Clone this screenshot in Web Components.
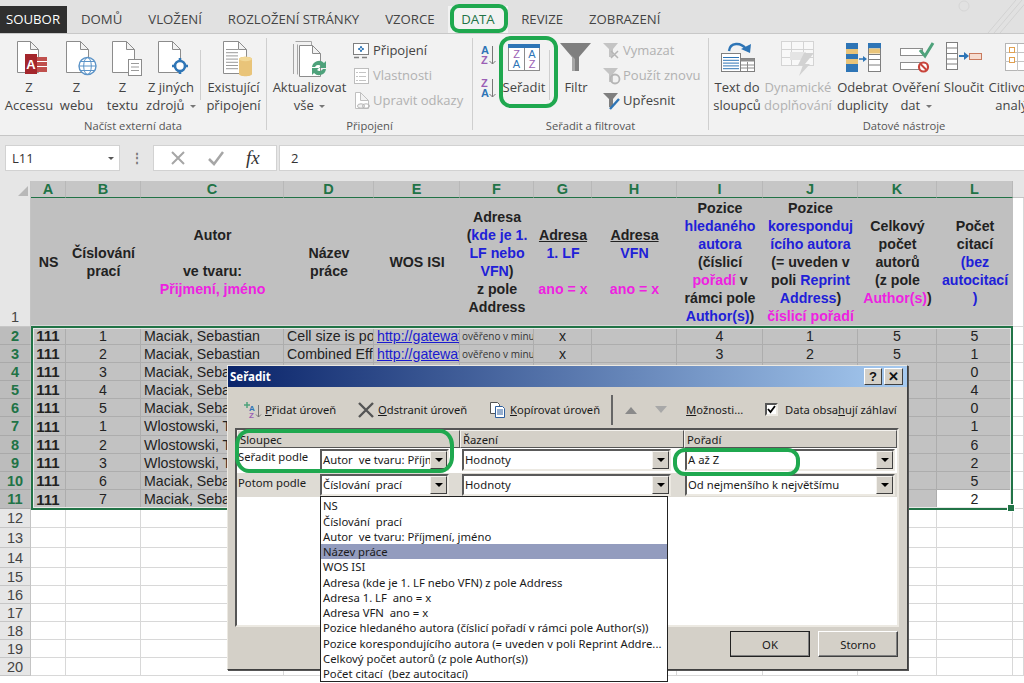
<!DOCTYPE html>
<html lang="cs">
<head>
<meta charset="utf-8">
<title>Seřadit</title>
<style>
  html, body { margin: 0; padding: 0; width: 1024px; height: 683px; overflow: hidden; background: #fff; }
  body { position: relative; font-family: "Open Sans", "Noto Sans", sans-serif; }
</style>
</head>
<body>
<xl-tabbar>
  <xl-tab kind="file">SOUBOR</xl-tab>
  <xl-tab>DOMŮ</xl-tab>
  <xl-tab>VLOŽENÍ</xl-tab>
  <xl-tab>ROZLOŽENÍ STRÁNKY</xl-tab>
  <xl-tab>VZORCE</xl-tab>
  <xl-tab kind="active">DATA</xl-tab>
  <xl-tab>REVIZE</xl-tab>
  <xl-tab>ZOBRAZENÍ</xl-tab>
</xl-tabbar>

<xl-ribbon>
  <rb-group label="Načíst externí data" style="width:267px">
    <rb-big w="48" pad="5" icon="access">Z<br>Accessu</rb-big>
    <rb-big w="47" icon="web">Z<br>webu</rb-big>
    <rb-big w="45" icon="text">Z<br>textu</rb-big>
    <rb-big w="52" icon="other">Z jiných<br>zdrojů <rb-caret></rb-caret></rb-big>
    <rb-sep style="margin-left:3px"></rb-sep>
    <rb-big w="65" icon="existing">Existující<br>připojení</rb-big>
  </rb-group>
  <rb-group label="Připojení" style="width:206px">
    <rb-big w="85" icon="refresh">Aktualizovat<br>vše <rb-caret></rb-caret></rb-big>
    <rb-col>
      <rb-small icon="conn">Připojení</rb-small>
      <rb-small icon="props" muted>Vlastnosti</rb-small>
      <rb-small icon="links" muted>Upravit odkazy</rb-small>
    </rb-col>
  </rb-group>
  <rb-group label="Seřadit a filtrovat" style="width:236px">
    <rb-az></rb-az>
    <rb-big w="50" icon="sort">Seřadit</rb-big>
    <rb-sep></rb-sep>
    <rb-big w="52" icon="filter">Filtr</rb-big>
    <rb-col>
      <rb-small icon="fclear" muted>Vymazat</rb-small>
      <rb-small icon="freapply" muted>Použít znovu</rb-small>
      <rb-small icon="fadv">Upřesnit</rb-small>
    </rb-col>
  </rb-group>
  <rb-group label="Datové nástroje" style="width:390px" last>
    <rb-big w="56" icon="columns">Text do<br>sloupců</rb-big>
    <rb-big w="66" icon="flash" muted>Dynamické<br>doplňování</rb-big>
    <rb-big w="63" icon="dupes">Odebrat<br>duplicity</rb-big>
    <rb-big w="44" icon="valid">Ověření<br>dat <rb-caret></rb-caret></rb-big>
    <rb-big w="52" icon="merge">Sloučit</rb-big>
    <rb-big w="56" icon="whatif">Citlivostní<br>analýza</rb-big>
  </rb-group>
</xl-ribbon>

<xl-formula name="L11" value="2"></xl-formula>
<xl-sheet></xl-sheet>
<sort-dialog></sort-dialog>

<green-mark style="left:450px;top:4px;width:58px;height:29px;border-radius:9px"></green-mark>
<green-mark style="left:499px;top:36px;width:59px;height:72px;border-radius:12px"></green-mark>
<green-mark style="left:235px;top:429px;width:219px;height:44px;border-radius:14px / 16px"></green-mark>
<green-mark style="left:673px;top:448px;width:127px;height:28px;border-radius:12px"></green-mark>

<script>
const doc = (x, y, w, h, fill = '#fff', line = '#8c8c8c') =>
  `<path d="M${x}.5 ${y}.5h${w - 8}l8 8V${y + h}.5H${x}.5zM${x + w - 8}.5 ${y}.5v8h8" fill="${fill}" stroke="${line}"/>`;
const lines = (x, y, w, n, step, c = '#9a9a9a') => {
  let s = '';
  for (let i = 0; i < n; i++) s += `<path d="M${x} ${y + i * step + .5}h${w}" stroke="${c}"/>`;
  return s;
};

const ICONS = {
  access: [40, 36, doc(8, 0, 21, 31) +
    `<rect x="16" y="13" width="12" height="20" fill="#a4262c"/>
     <text x="22" y="28" font-size="13" font-weight="700" fill="#fff" text-anchor="middle" font-family="Liberation Sans">A</text>
     <path d="M28 16h10v15H28z" fill="#c0504d"/><path d="M28 20.5h10M28 25.5h10" stroke="#fff"/>`],
  web: [40, 36, doc(9, 0, 22, 31) +
    `<circle cx="30.5" cy="25" r="8.5" fill="#fff" stroke="#5b93c7" stroke-width="1.4"/>
     <ellipse cx="30.5" cy="25" rx="3.8" ry="8.5" fill="none" stroke="#5b93c7"/>
     <path d="M22 25h17M23.5 20.5h14M23.5 29.5h14" stroke="#5b93c7"/>`],
  text: [40, 36, doc(9, 0, 22, 31) +
    `<rect x="25.5" y="18.5" width="13" height="16" fill="#fff" stroke="#8c8c8c"/>` + lines(28, 22, 8, 3, 3.5)],
  other: [40, 36, doc(7, 0, 22, 31) +
    `<circle cx="29" cy="25" r="5" fill="#fff" stroke="#2e75b6" stroke-width="2.6"/>
     <path d="M29 17v3M29 30v3M21 25h3M34 25h3" stroke="#2e75b6" stroke-width="2.6"/>`],
  existing: [40, 36, doc(9, 0, 23, 32) + lines(12, 8, 12, 7, 3.2) +
    `<path d="M25 18c0-3 13-3 13 0v15c0 3-13 3-13 0z" fill="#e9c479"/><ellipse cx="31.5" cy="18" rx="6.5" ry="2.2" fill="#f2d896"/>`],
  refresh: [40, 36, `<path d="M5.500 .5h16v4M3.500 3v30M7.500 3.500v30" fill="none" stroke="#a6a6a6"/>` + doc(9, 4, 21, 31) +
    `<path d="M22 26a7 7 0 0 1 12-4l2-2v7h-7l2-2a4 4 0 0 0-6 1zM36 28a7 7 0 0 1-12 4l-2 2v-7h7l-2 2a4 4 0 0 0 6-1z" fill="#4ea27b"/>`],
  conn: [20, 20, `<rect x="1.500" y="2.500" width="15" height="11" fill="#fff" stroke="#7f7f7f"/>
     <path d="M9 5v2M9 9v2M6 8h2M10 8h2" stroke="#2e75b6" stroke-width="1.5"/><circle cx="9" cy="8" r="1.500" fill="none" stroke="#2e75b6"/>
     <path d="M2 16.500h5M10 16.500h5" stroke="#7f7f7f" stroke-width="1.500"/>`],
  props: [20, 20, `<rect x="2.500" y="2.500" width="14" height="15" fill="#fff" stroke="#bdbdbd"/>` + lines(7, 6, 7, 3, 4, '#c4c4c4') + lines(4, 6, 2, 3, 4, '#c4c4c4')],
  links: [20, 20, doc(3, 1, 13, 16, '#fff', '#c0c0c0') +
    `<ellipse cx="9" cy="15" rx="3.500" ry="2.200" fill="#f2f2f2" stroke="#b5b5b5"/><ellipse cx="14" cy="15" rx="3.500" ry="2.200" fill="none" stroke="#b5b5b5"/>`],
  sort: [40, 36, `<rect x="4.500" y="3.500" width="31" height="26" fill="#fff" stroke="#8c8c8c"/><rect x="4" y="3" width="32" height="4" fill="#2e75b6"/>
     <path d="M20.500 7v23" stroke="#8c8c8c"/>
     <g font-size="11" font-family="Liberation Sans" text-anchor="middle">
     <text x="12.500" y="17" fill="#9b5fb5">Z</text><text x="12.500" y="27" fill="#2e75b6">A</text>
     <text x="28" y="17" fill="#2e75b6">A</text><text x="28" y="27" fill="#9b5fb5">Z</text></g>`],
  filter: [40, 36, `<path d="M4 2h31L23 16v14h-7V16z" fill="#7f7f7f"/><path d="M14 13l5 5v12h-3V16z" fill="#a6a6a6"/>`],
  fclear: [20, 20, `<path d="M1 2h15l-5 6v8H7V8z" fill="#c4c4c4"/><path d="M9 10l7 7M16 10l-7 7" stroke="#b5b5b5" stroke-width="1.500"/>`],
  freapply: [20, 20, `<path d="M1 2h15l-5 6v8H7V8z" fill="#c4c4c4"/><circle cx="13" cy="13" r="4.500" fill="none" stroke="#b5b5b5" stroke-width="1.800"/>`],
  fadv: [20, 20, `<path d="M1 2h15l-5 6v8H7V8z" fill="#7f7f7f"/><path d="M8 18L17 8" stroke="#2e75b6" stroke-width="2.400"/>`],
  columns: [40, 36, `<g transform="translate(2 -3)"><rect x="2.500" y="15.500" width="19" height="18" fill="#fff" stroke="#7f7f7f"/>` + lines(4, 19, 16, 5, 2.800, '#2e75b6') +
    `<rect x="21.500" y="20.500" width="14" height="13" fill="#fff" stroke="#7f7f7f"/><path d="M21.500 20.500h14v3h-14z" fill="#8c8c8c"/><path d="M28.500 24v9M22 27h13M22 30h13" stroke="#8c8c8c"/>
     <path d="M10 13C11 4 22 4 27 11" fill="none" stroke="#2e75b6" stroke-width="2.400"/><path d="M22 11l9 4 1-9z" fill="#2e75b6"/></g>`],
  flash: [40, 36, `<rect x="3.500" y=".5" width="32" height="24" fill="#f8f8f8" stroke="#d4d4d4"/>
     <path d="M3 8.500h33M3 16.500h33M13.500 1v24M25.500 1v24" stroke="#d4d4d4"/><path d="M12 11h16v8H12z" fill="#e4e4e4"/>
     <path d="M26 12h10l-9 11h5L21 35l4-11h-5z" fill="#d2d2d2"/>`],
  dupes: [40, 36, `<rect x="3" y="2" width="12" height="29" fill="#2e75b6"/><rect x="3" y="8" width="12" height="5" fill="#e9c479"/><rect x="3" y="18" width="12" height="5" fill="#e9c479"/>
     <path d="M16 18h5" stroke="#2e75b6" stroke-width="1.500"/><path d="M20 15l4 3-4 3z" fill="#2e75b6"/>
     <rect x="25.500" y="2.500" width="12" height="28" fill="#fff" stroke="#7f7f7f"/><rect x="25" y="2" width="13" height="5.400" fill="#2e75b6"/><rect x="26" y="7.500" width="11" height="5" fill="#e9c479"/>
     <path d="M26 13.500h11M26 18.500h11M26 24h11" stroke="#7f7f7f"/>`],
  valid: [40, 36, `<rect x="4.500" y="7.500" width="22" height="7" fill="#fff" stroke="#8c8c8c"/><rect x="4.500" y="21.500" width="22" height="7" fill="#fff" stroke="#8c8c8c"/>
     <path d="M24 9l5 6L37 2" fill="none" stroke="#4ea27b" stroke-width="3"/>
     <circle cx="27.500" cy="26" r="4.500" fill="#fff" stroke="#c8433a" stroke-width="2.200"/><path d="M24.500 23l6 6" stroke="#c8433a" stroke-width="2"/>`],
  merge: [40, 36, `<rect x="2.500" y="1.500" width="11" height="27" fill="#fff" stroke="#7f7f7f"/><path d="M3 7h10M3 12.500h10M3 18h10M3 23h10" stroke="#7f7f7f"/>
     <path d="M15 15h7" stroke="#2e75b6" stroke-width="2"/><path d="M20 11l5 4-5 4z" fill="#2e75b6"/>
     <rect x="25.500" y="12.500" width="12" height="6" fill="#f6dcd0" stroke="#c97a5e"/>`],
  whatif: [40, 36, `<g transform="translate(5 1)"><rect x="2.500" y="1.500" width="36" height="27" fill="#fff" stroke="#b5b5b5"/><path d="M2 10.500h36M2 19.500h36M14.500 2v27M26.500 2v27" stroke="#c4c4c4"/>
     <rect x="6.500" y="5.500" width="5" height="5" fill="#fff" stroke="#e0a050"/><rect x="6.500" y="15.500" width="5" height="5" fill="#fff" stroke="#e0a050"/></g>`]
};

// small helper so each element does not repeat the same constructor
function define(name, html, setup) {
  const template = document.createElement('template');
  template.innerHTML = html;
  customElements.define(name, class extends HTMLElement {
    constructor() {
      super();
      this.attachShadow({ mode: 'open' });
      this.shadowRoot.appendChild(template.content.cloneNode(true));
    }
    connectedCallback() {
      if (setup) setup(this, this.shadowRoot);
    }
  });
}

class RbIcon extends HTMLElement {
  static get observedAttributes() { return ['name']; }
  constructor() {
    super();
    this.attachShadow({ mode: 'open' });
  }
  attributeChangedCallback(attr, old, name) {
    const [w, h, body] = ICONS[name];
    this.shadowRoot.innerHTML = `<style>:host { display: block; line-height: 0; } svg { display: block; overflow: visible; }</style>
      <svg width="${w}" height="${h}" viewBox="0 0 ${w} ${h}">${body}</svg>`;
  }
}
customElements.define('rb-icon', RbIcon);

define('xl-tabbar', `
  <style>
    :host { display: flex; height: 34px; box-sizing: border-box; padding-top: 6px; background: #e1e1e1; border-bottom: 1px solid #c8c8c8; position: relative; }
    svg { position: absolute; right: 0; top: 0; }
  </style>
  <slot></slot>
  <svg width="70" height="33"><path d="M34 33L62 0M40 33L68 0M46 33L74 0" stroke="#d2d2d2" fill="none"/><circle cx="10" cy="6" r="5" fill="none" stroke="#d6d6d6"/></svg>`);

define('xl-tab', `
  <style>
    :host { display: block; font: 13.2px/27px "Open Sans", sans-serif; color: #444; padding: 0 13px; white-space: nowrap; }
    :host([kind=file]) { background: #2f2f2f; color: #fff; padding: 0 7px 0 6px; margin-right: 1px; }
    :host([kind=active]) { color: #217346; background: #f2f2f2; padding: 0 13.500px; }
  </style><slot></slot>`);

define('xl-ribbon', `
  <style>
    :host { display: flex; height: 102px; box-sizing: border-box; background: #f2f2f2; border-bottom: 1px solid #c6c6c6; overflow: hidden; }
  </style><slot></slot>`);

define('rb-group', `
  <style>
    :host { display: flex; flex: none; box-sizing: border-box; height: 101px; position: relative; }
    .in { flex: 1; display: flex; flex-direction: column; min-width: 0; }
    .body { height: 83px; display: flex; align-items: flex-start; }
    .label { height: 17px; font: 11.2px/17px "Open Sans", sans-serif; color: #555; text-align: center; }
    .sep { width: 1px; margin: 4px 0 5px; background: #cfcfcf; flex: none; }
    :host([last]) .sep { display: none; }
  </style>
  <div class="in"><div class="body"><slot></slot></div><div class="label"></div></div>
  <div class="sep"></div>`, (el, root) => { root.querySelector('.label').textContent = el.getAttribute('label'); });

define('rb-big', `
  <style>
    :host { display: flex; flex: none; flex-direction: column; align-items: center; padding-top: 7px; }
    .i { height: 37px; }
    .t { font: 13px/18px "Open Sans", sans-serif; color: #444; text-align: center; white-space: nowrap; }
    :host([muted]) .t { color: #b1b1b1; }
  </style>
  <div class="i"><rb-icon></rb-icon></div><div class="t"><slot></slot></div>`, (el, root) => {
  el.style.width = el.getAttribute('w') + 'px';
  if (el.getAttribute('pad')) el.style.marginLeft = el.getAttribute('pad') + 'px';
  root.querySelector('rb-icon').setAttribute('name', el.getAttribute('icon'));
});

define('rb-caret', `<style>:host { display: inline-block; width: 0; height: 0; border: 3px solid transparent; border-top: 3px solid #777; border-bottom: 0; vertical-align: middle; margin-left: 2px; }</style>`);
define('rb-sep', `<style>:host { display: block; flex: none; width: 1px; height: 50px; margin-top: 16px; background: #cfcfcf; }</style>`);
define('rb-col', `<style>:host { display: flex; flex: none; flex-direction: column; padding-top: 4px; }</style><slot></slot>`);

define('rb-small', `
  <style>
    :host { display: flex; align-items: center; gap: 1px; height: 25px; font: 13px/25px "Open Sans", sans-serif; color: #444; white-space: nowrap; }
    :host([muted]) { color: #b1b1b1; }
  </style>
  <rb-icon></rb-icon><slot></slot>`, (el, root) => { root.querySelector('rb-icon').setAttribute('name', el.getAttribute('icon')); });

define('rb-az', `
  <style>
    :host { display: flex; flex: none; flex-direction: column; width: 26px; padding: 10px 0 0 8px; box-sizing: border-box; gap: 10px; }
    svg { display: block; }
    text { font: 700 11px "Liberation Sans", sans-serif; }
  </style>
  <svg width="18" height="23"><text x="0" y="10" fill="#2e75b6">A</text><text x="0" y="20" fill="#9b5fb5">Z</text><path d="M11.500 2v18M8.500 17l3 3 3-3" fill="none" stroke="#777"/></svg>
  <svg width="18" height="23"><text x="0" y="10" fill="#9b5fb5">Z</text><text x="0" y="20" fill="#2e75b6">A</text><path d="M11.500 2v18M8.500 17l3 3 3-3" fill="none" stroke="#777"/></svg>`);

define('xl-formula', `
  <style>
    :host { display: flex; align-items: center; height: 45px; box-sizing: border-box; padding: 9px 0 10px 5px; background: #e6e6e6; font: 13px "Open Sans", sans-serif; color: #333; }
    .box { background: #fff; border: 1px solid #d2d2d2; box-sizing: border-box; height: 26px; display: flex; align-items: center; }
    .name { width: 115px; padding: 0 5px 0 6px; justify-content: space-between; }
    .name i { border: 3.5px solid transparent; border-top-color: #555; border-bottom: 0; }
    .dots { width: 33px; text-align: center; color: #777; font-weight: 700; line-height: 8px; font-size: 12px; }
    .btns { width: 124px; justify-content: space-around; padding: 0 6px; }
    .fx { font: italic 400 19px "Liberation Serif", serif; color: #333; }
    .val { flex: 1; margin-left: 2px; padding-left: 11px; border-right: 0; }
  </style>
  <div class="box name"><span></span><i></i></div>
  <div class="dots">⋮</div>
  <div class="box btns">
    <svg width="16" height="16"><path d="M2 2l12 12M14 2L2 14" stroke="#a6a6a6" stroke-width="2"/></svg>
    <svg width="18" height="16"><path d="M2 9l5 5L16 2" fill="none" stroke="#a6a6a6" stroke-width="2.500"/></svg>
    <span class="fx">fx</span>
  </div>
  <div class="box val"></div>`, (el, root) => {
  root.querySelector('.name span').textContent = el.getAttribute('name');
  root.querySelector('.val').textContent = el.getAttribute('value');
});

const B = s => `<b style="color:#2020d8">${s}</b>`;
const M = s => `<b style="color:#ee22e0">${s}</b>`;
const HEAD = [
  'NS', 'Číslování<br>prací', `Autor<br><br>ve tvaru:<br>${M('Přijmení, jméno')}`, 'Název<br>práce', 'WOS ISI',
  `Adresa<br>(${B('kde je 1.')}<br>${B('LF nebo')}<br>${B('VFN')})<br>z pole<br>Address`,
  `<u>Adresa</u><br>${B('1. LF')}<br><br>${M('ano = x')}`,
  `<u>Adresa</u><br>${B('VFN')}<br><br>${M('ano = x')}`,
  `Pozice<br>${B('hledaného')}<br>${B('autora')}<br>(číslicí<br>${M('pořadí')} v<br>rámci pole<br>${B('Author(s)')})`,
  `Pozice<br>${B('koresponduj')}<br>${B('ícího autora')}<br>(= uveden v<br>poli ${B('Reprint')}<br>${B('Address')})<br>${M('číslicí pořadí')}`,
  `Celkový<br>počet<br>autorů<br>(z pole<br>${M('Author(s)')})`,
  `Počet<br>citací<br>${B('(bez')}<br>${B('autocitací')}<br>${B(')')}`
];
const ROWS = [
  [1, 'Maciak, Sebastian', 'Cell size is poorly correlated', 1, 'x', 4, 1, 5, 5],
  [2, 'Maciak, Sebastian', 'Combined Effects of Temperature', 1, 'x', 3, 2, 5, 1],
  [3, 'Maciak, Sebastian', '', 0, '', '', '', 5, 0],
  [4, 'Maciak, Sebastian', '', 0, '', '', '', 5, 4],
  [5, 'Maciak, Sebastian', '', 0, '', '', '', 5, 0],
  [1, 'Wlostowski, Tomasz', '', 0, '', '', '', 5, 1],
  [2, 'Wlostowski, Tomasz', '', 0, '', '', '', 5, 6],
  [3, 'Wlostowski, Tomasz', '', 0, '', '', '', 5, 2],
  [6, 'Maciak, Sebastian', '', 0, '', '', '', 5, 5],
  [7, 'Maciak, Sebastian', '', 0, '', '', '', 5, 2]
];
const LETTERS = 'ABCDEFGHIJKL'.split('');

define('xl-sheet', `
  <style>
    :host { display: grid; position: relative; height: 503px; overflow: hidden;
      grid-template-columns: 31px 35px 75px 143px 90px 86px 74px 58px 85px 86px 95px 79px 76px 11px;
      grid-template-rows: 17px 129px 18px 18px 18px 18px 18px 19px 18px 18px 18px 19px 19px 20px 20px 18px 18px 18px 18px 18px 18px;
      font: 14.2px "Liberation Sans", sans-serif; color: #222; background: #fff; }
    .c { box-sizing: border-box; overflow: hidden; white-space: nowrap; display: flex; align-items: center; justify-content: center; min-width: 0; }
    .corner { background: #e6e6e6; border-right: 1px solid #c4c4c4; position: relative; }
    .corner i { position: absolute; right: 2px; bottom: 2px; border: 5px solid transparent; border-right-color: #b8b8b8; border-bottom-color: #b8b8b8; }
    .ch { background: #c6c6c6; color: #217346; font-weight: 700; border-right: 1px solid #b8b8b8; border-bottom: 1px solid #217346; font-size: 14.500px; }
    .top { background: #e6e6e6; border-bottom: 1px solid #c4c4c4; }
    .rh { background: #e6e6e6; border-bottom: 1px solid #c6c6c6; border-right: 1px solid #c4c4c4; font-size: 14.500px; color: #444; }
    .rh.sel { background: #bcbcbc; color: #217346; font-weight: 700; border-bottom-color: #a9a9a9; }
    .rh.one { align-items: flex-end; padding-bottom: 1px; }
    .hd { background: #c0c0c0; font-weight: 700; line-height: 18px; text-align: center; border-bottom: 2px solid #d8d8d8; }
    .hd b { font-weight: 700; }
    .d { background: #c2c2c2; border-right: 1px solid #adadad; border-bottom: 1px solid #adadad; }
    .l { justify-content: flex-start; padding-left: 3px; }
    .lnk { color: #1a1ad0; text-decoration: underline; justify-content: flex-start; padding-left: 3px; }
    .sm { font: 10px "Open Sans", sans-serif; color: #333; justify-content: flex-start; padding-left: 2px; }
    .b { font-weight: 700; font-size: 15px; }
    .act { background: #fff; }
    .e { border-right: 1px solid #d8d8d8; border-bottom: 1px solid #d8d8d8; }
    .range { grid-column: 2 / 14; grid-row: 3 / 13; position: absolute; inset: -1px 0 -1px 0; border: 2px solid #217346; box-shadow: inset 0 0 0 1px #e8e8e8; z-index: 2; }
    .range i { position: absolute; right: -4px; bottom: -4px; width: 6px; height: 6px; background: #217346; border: 1px solid #fff; }
  </style>`, (el, root) => {
  if (root.querySelector('.c')) return;
  let h = '<div class="c corner"><i></i></div>';
  LETTERS.forEach(l => { h += `<div class="c ch">${l}</div>`; });
  h += '<div class="c top"></div>';
  h += '<div class="c rh one">1</div>';
  HEAD.forEach(t => { h += `<div class="c hd"><div>${t}</div></div>`; });
  h += '<div class="c e"></div>';
  ROWS.forEach((r, i) => {
    h += `<div class="c rh sel">${i + 2}</div>`;
    h += `<div class="c d b">111</div><div class="c d">${r[0]}</div><div class="c d l">${r[1]}</div><div class="c d l">${r[2]}</div>`;
    h += r[3] ? '<div class="c d lnk">http://gateway.isiknowledge</div><div class="c d sm">ověřeno v minulosti</div>'
              : '<div class="c d"></div><div class="c d"></div>';
    h += `<div class="c d">${r[4]}</div><div class="c d"></div><div class="c d">${r[5]}</div><div class="c d">${r[6]}</div><div class="c d">${r[7]}</div>`;
    h += `<div class="c d${i === 9 ? ' act' : ''}">${r[8]}</div><div class="c e"></div>`;
  });
  for (let n = 12; n <= 20; n++) {
    h += `<div class="c rh">${n}</div>` + '<div class="c e"></div>'.repeat(13);
  }
  h += '<div class="range"><i></i></div>';
  const wrap = document.createElement('div');
  wrap.style.display = 'contents';
  wrap.innerHTML = h;
  root.appendChild(wrap);
});

define('sort-select', `
  <style>
    :host { display: flex; box-sizing: border-box; height: 22px; background: #fff; border: 2px solid; border-color: #5a5a5a #ece9e2 #ece9e2 #5a5a5a; font: 11.3px/18px "Noto Sans", sans-serif; color: #1a1a1a; min-width: 0; }
    .v { flex: 1; overflow: hidden; padding-left: 1px; min-width: 0; white-space: pre; }
    .a { flex: none; width: 17px; background: #d4d0c8; border: 1px solid; border-color: #f4f2ee #404040 #404040 #f4f2ee; box-sizing: border-box; display: flex; align-items: center; justify-content: center; }
    .a i { border: 4px solid transparent; border-top: 4px solid #000; border-bottom: 0; }
  </style>
  <div class="v"></div><div class="a"><i></i></div>`, (el, root) => { root.querySelector('.v').textContent = el.getAttribute('value'); });

define('sort-dialog', `
  <style>
    :host { position: absolute; left: 227px; top: 365px; width: 681px; height: 305px; box-sizing: border-box; background: #d4d0c8; border: 1px solid; border-color: #ece9e2 #404040 #404040 #ece9e2; box-shadow: 1px 1px 0 #555; font: 11.3px "Noto Sans", sans-serif; color: #1a1a1a; z-index: 5; }
    .title { height: 21px; display: flex; align-items: center; justify-content: space-between; padding: 0 4px 0 2px; background: linear-gradient(90deg, #0a246a, #a6caf0); color: #fff; font-weight: 700; font-size: 11.500px; }
    .wb { display: flex; gap: 2px; }
    .wb span { width: 18px; height: 17px; box-sizing: border-box; background: #d4d0c8; border: 1px solid; border-color: #fff #404040 #404040 #fff; color: #111; display: flex; align-items: center; justify-content: center; font: 700 13px "Liberation Sans", sans-serif; }
    .wb span + span { width: 19px; }
    .tools { height: 41px; display: flex; align-items: center; padding: 4px 0 0 15px; box-sizing: border-box; white-space: nowrap; font-size: 11.200px; }
    .tools u { text-decoration: underline; }
    .t { display: flex; align-items: center; gap: 3px; }
    .bar { width: 2px; height: 30px; background: #666; margin: 0 11px; }
    .panel { margin: 0 8px 0 7px; height: 199px; box-sizing: border-box; background: #fff; border: 2px solid; border-color: #555 #ece9e2 #ece9e2 #555; display: grid; grid-template-columns: 83px 140px 224px 1fr; grid-template-rows: 18px 25px 24px 1fr; }
    .h { background: #d4d0c8; border: 1px solid; border-color: #f4f2ee #555 #555 #f4f2ee; padding: 1px 0 0 2px; line-height: 15px; }
    .h1 { grid-column: 1 / 3; }
    .lab { padding: 1px 0 0 1px; line-height: 16px; }
    .lab.g { padding-top: 2px; }
    .cell { min-width: 0; padding-top: 1px; }
    .cell sort-select { width: 100%; }
    .g { background: #dedbd4; }
    .foot { display: flex; justify-content: flex-end; gap: 8px; padding: 4px 9px 0 0; }
    .btn { width: 80px; height: 26px; box-sizing: border-box; background: #d4d0c8; border: 1px solid; border-color: #fff #404040 #404040 #fff; box-shadow: inset -1px -1px 0 #808080; display: flex; align-items: center; justify-content: center; }
    .btn.def { outline: 1px solid #222; outline-offset: -1px; }
    .list { position: absolute; left: 92px; top: 130px; width: 348px; height: 186px; box-sizing: border-box; background: #fff; border: 1px solid #222; padding-top: 1.300px; z-index: 3; overflow: hidden; }
    .list div { height: 15.270px; line-height: 15.270px; padding-left: 2px; white-space: pre; }
    .list .sel { background: #939cbe; }
    .chk { width: 13px; height: 13px; box-sizing: border-box; background: #fff; border: 2px solid; border-color: #555 #ece9e2 #ece9e2 #555; display: flex; }
  </style>
  <div class="title"><span>Seřadit</span><div class="wb"><span>?</span><span>✕</span></div></div>
  <div class="tools">
    <div class="t" style="width:114px">
      <svg width="19" height="19"><path d="M1 5h6M4 2v6" stroke="#4ea27b" stroke-width="1.500"/><text x="6" y="11" font-size="8" font-weight="700" fill="#2e75b6" font-family="Liberation Sans">A</text><text x="6" y="18" font-size="8" font-weight="700" fill="#9b5fb5" font-family="Liberation Sans">Z</text><path d="M15.500 5v12M13 14.500l2.500 2.500 2.500-2.500" fill="none" stroke="#777"/></svg>
      <span><u>P</u>řidat úroveň</span></div>
    <div class="t" style="width:132px">
      <svg width="18" height="18"><path d="M2 2l14 14M16 2L2 16" stroke="#555" stroke-width="2.400"/></svg>
      <span><u>O</u>dstranit úroveň</span></div>
    <div class="t">
      <svg width="18" height="18"><path d="M1.500 1.500h7l2 2v9h-9z" fill="#fff" stroke="#555"/><path d="M6.500 5.500h7l2 2v9h-9z" fill="#fff" stroke="#2e5f9e"/><path d="M8 9h6M8 11h6M8 13h6" stroke="#2e5f9e"/></svg>
      <span><u>K</u>opírovat úroveň</span></div>
    <div class="bar"></div>
    <svg width="12" height="8" style="margin-left:1px"><path d="M0 8L6 1l6 7z" fill="#8a8a8a"/></svg>
    <svg width="12" height="8" style="margin-left:18px"><path d="M0 0l6 7 6-7z" fill="#a8a8a8"/></svg>
    <span style="margin-left:19px;width:79px"><u>M</u>ožnosti...</span>
    <span class="chk"><svg width="9" height="9"><path d="M1 4l2.500 3L8 1" fill="none" stroke="#000" stroke-width="1.800"/></svg></span>
    <span style="margin-left:7px">Data obsa<u>h</u>ují záhlaví</span>
  </div>
  <div class="panel">
    <div class="h h1">Sloupec</div><div class="h">Řazení</div><div class="h">Pořadí</div>
    <div class="lab">Seřadit podle</div>
    <div class="cell" style="padding-right:11px"><sort-select value="Autor  ve tvaru: Příjmení, jméno"></sort-select></div>
    <div class="cell" style="padding-left:2px;padding-right:13px"><sort-select value="Hodnoty"></sort-select></div>
    <div class="cell" style="padding-left:1px;padding-right:2px"><sort-select value="A až Z"></sort-select></div>
    <div class="lab g">Potom podle</div>
    <div class="cell g" style="padding-right:11px"><sort-select value="Číslování  prací"></sort-select></div>
    <div class="cell g" style="padding-left:2px;padding-right:13px"><sort-select value="Hodnoty"></sort-select></div>
    <div class="cell g" style="padding-left:1px;padding-right:2px"><sort-select value="Od nejmenšího k největšímu"></sort-select></div>
  </div>
  <div class="foot"><div class="btn def">OK</div><div class="btn">Storno</div></div>
  <div class="list">
    <div>NS</div>
    <div>Číslování  prací</div>
    <div>Autor  ve tvaru: Příjmení, jméno</div>
    <div class="sel">Název práce</div>
    <div>WOS ISI</div>
    <div>Adresa (kde je 1. LF nebo VFN) z pole Address</div>
    <div>Adresa 1. LF  ano = x</div>
    <div>Adresa VFN  ano = x</div>
    <div>Pozice hledaného autora (číslicí pořadí v rámci pole Author(s))</div>
    <div>Pozice korespondujícího autora (= uveden v poli Reprint Addre...</div>
    <div>Celkový počet autorů (z pole Author(s))</div>
    <div>Počet citací  (bez autocitací)</div>
  </div>`);

define('green-mark', `<style>:host { position: absolute; box-sizing: border-box; border: 4px solid #1fa84f; z-index: 9; pointer-events: none; }</style>`);
</script>
</body>
</html>
